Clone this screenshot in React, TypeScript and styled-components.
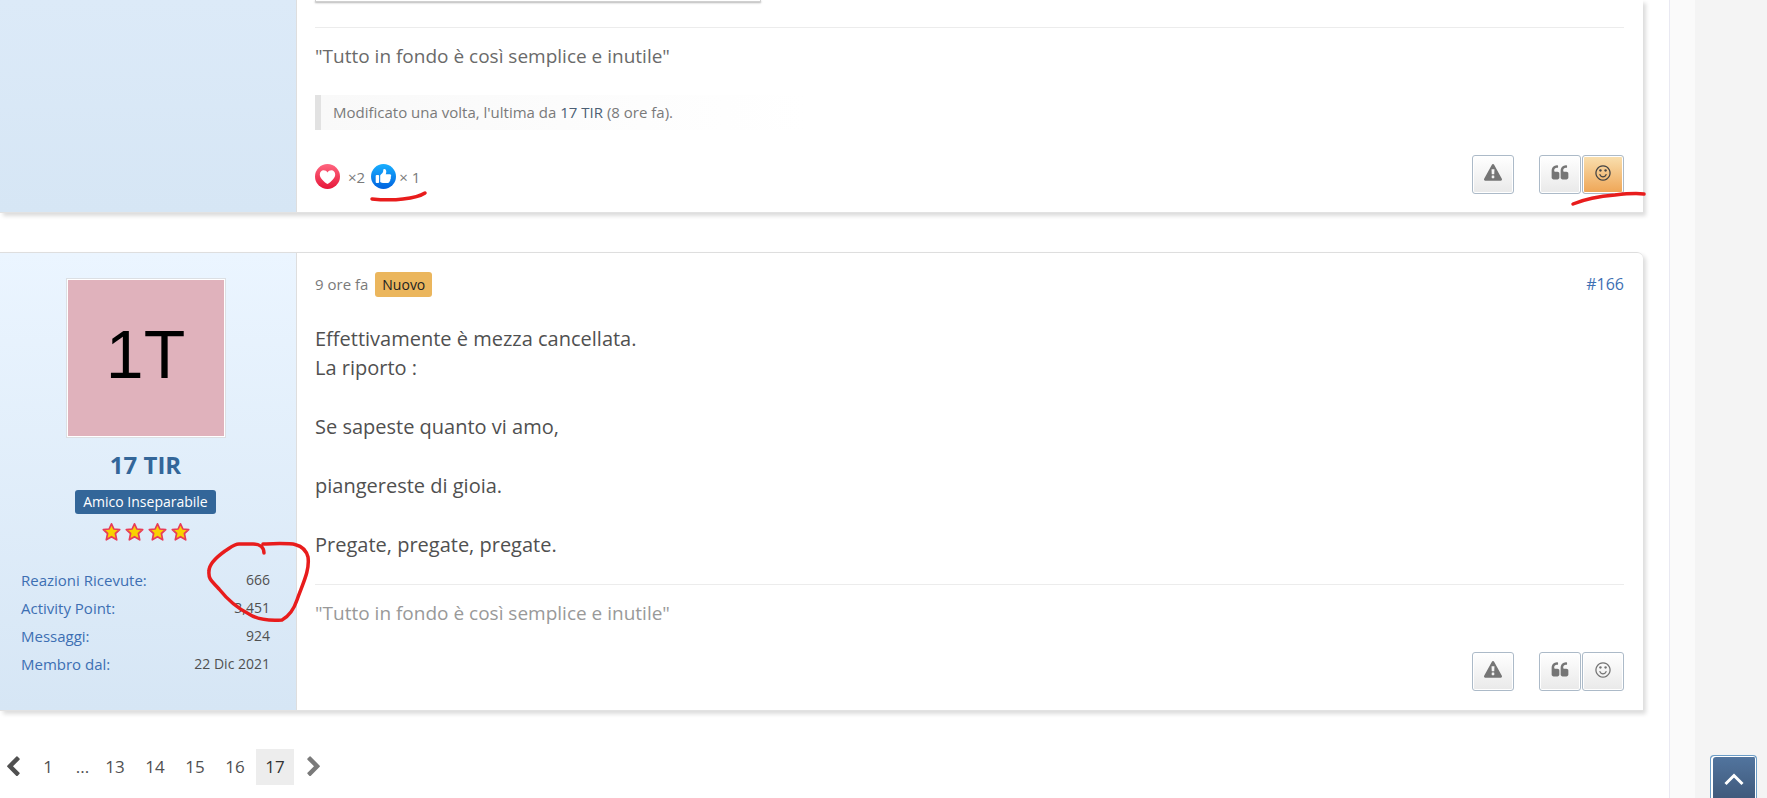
import React from 'react';
import styled, { createGlobalStyle, css } from 'styled-components';

const GlobalStyle = createGlobalStyle`
  *, *::before, *::after { box-sizing: border-box; }
  html { background: #f4f4f4; }
  body {
    margin: 0;
    color: #505050;
    font: 15px/24px "Open Sans", "Noto Sans", sans-serif;
  }
  a { color: inherit; text-decoration: none; }
  p, h3, dl, dd, ul { margin: 0; padding: 0; }
`;

const Page = styled.div`
  display: flex;
  min-height: 100vh;
  padding-right: 72px;
  overflow: hidden;
`;

const Main = styled.main`
  flex: 1;
  min-width: 0;
  padding-right: 26px;
  background: #fff;
  border-right: 1px solid #e9e9f2;
`;

const Strip = styled.div`
  flex: 0 0 25px;
  background: #fafafa;
`;

const Post = styled.article<{ $continued?: boolean }>`
  display: flex;
  margin-bottom: 38px;
  border-top: 1px solid #dedede;
  border-bottom: 1px solid #e2e2e2;
  border-radius: 0 6px 0 0;
  box-shadow: 3px 3px 4px rgba(0, 0, 0, 0.14);
  ${({ $continued }) =>
    $continued &&
    css`
      margin-bottom: 39px;
      border-top: 0;
      border-radius: 0;
    `}
`;

const Sidebar = styled.aside<{ $plain?: boolean }>`
  flex: 0 0 297px;
  display: flex;
  flex-direction: column;
  align-items: center;
  padding: 25px 26px 32px 21px;
  border-right: 1px solid #dedede;
  background: ${({ $plain }) =>
    $plain
      ? 'linear-gradient(#dceaf8, #d6e6f5)'
      : 'linear-gradient(#ebf5ff, #d6e6f5)'};
`;

const Body = styled.div<{ $top?: number }>`
  flex: 1;
  min-width: 0;
  display: flex;
  flex-direction: column;
  padding: ${({ $top = 0 }) => $top}px 19px 18px 18px;
`;

const Embed = styled.div`
  width: 446px;
  height: 2px;
  border: 1px solid #d0d0d0;
  border-top: 0;
  box-shadow: 0 1px 2px rgba(0, 0, 0, 0.3);
`;

const Signature = styled.div<{ $dim?: boolean }>`
  padding-top: 14px;
  border-top: 1px solid #ececec;
  color: ${({ $dim }) => ($dim ? '#999' : '#6a6a6a')};
  font-size: 19px;
  line-height: 29px;
`;

const EmbedGap = styled.div`
  height: 25px;
`;

const EditNote = styled.p`
  width: 490px;
  margin: 24px 0 25px;
  padding: 5px 12px;
  border-left: 6px solid #e2e2e2;
  background: linear-gradient(90deg, #f9f9f9, #fff);
  color: #7a7a7a;
  line-height: 25px;
  a { color: #4c5f75; }
`;

const Footer = styled.footer`
  display: flex;
  justify-content: space-between;
`;

const Reactions = styled.ul`
  display: flex;
  gap: 6px;
  padding-top: 9px;
  list-style: none;
`;

const Reaction = styled.li<{ $gap: number }>`
  position: relative;
  display: flex;
  align-items: center;
  gap: ${({ $gap }) => $gap}px;
  height: 25px;
  color: #7a7a7a;
  svg { display: block; }
`;

const Actions = styled.div`
  position: relative;
  display: flex;
  gap: 1px;
  margin-left: auto;
`;

const Action = styled.button<{ $active?: boolean; $apart?: boolean }>`
  display: flex;
  align-items: center;
  justify-content: center;
  width: 42px;
  height: 39px;
  margin-right: ${({ $apart }) => ($apart ? 24 : 0)}px;
  padding: 0 0 4px;
  border: 1px solid #acbac8;
  border-radius: 3px;
  box-shadow: inset 0 0 0 1px #fff;
  background: ${({ $active }) =>
    $active
      ? 'linear-gradient(#f9e0b0, #efa555)'
      : 'linear-gradient(#ffffff, #e9e9e9)'};
  color: ${({ $active }) => ($active ? '#444' : '#757575')};
  cursor: pointer;
`;

const Glyph = styled.svg`
  display: block;
  fill: currentColor;
`;

const Avatar = styled.a`
  display: flex;
  align-items: center;
  justify-content: center;
  width: 160px;
  height: 160px;
  padding-bottom: 8px;
  border: 1px solid #dcdfe3;
  box-shadow: inset 0 0 0 1px #fff;
  background: #e0b2bc;
  color: #000;
  font: 68px/80px "Liberation Sans", Arial, sans-serif;
`;

const UserName = styled.h3`
  margin-top: 11px;
  color: #336699;
  font-size: 24px;
  font-weight: 700;
  line-height: 32px;
`;

const Rank = styled.span`
  margin-top: 9px;
  padding: 0 8px;
  border-radius: 3px;
  background: #336699;
  color: #fff;
  font-size: 14px;
  line-height: 24px;
`;

const Stars = styled.div`
  display: flex;
  gap: 2px;
  margin-top: 8px;
`;

const Stats = styled.dl`
  position: relative;
  align-self: stretch;
  margin-top: 24px;
`;

const Stat = styled.div`
  display: flex;
  justify-content: space-between;
  line-height: 28px;
  dt { color: #3d6fb3; }
  dd { font-size: 14px; }
`;

const PostHeader = styled.header`
  display: flex;
  align-items: center;
  gap: 7px;
  line-height: 25px;
  color: #7a7a7a;
`;

const NewBadge = styled.span`
  padding: 0 7px;
  border-radius: 3px;
  background: #ebb65d;
  color: #222;
  font-size: 14px;
`;

const PostNumber = styled.a`
  margin-left: auto;
  color: #3d6fb3;
  font-size: 16px;
`;

const Message = styled.div`
  display: flex;
  flex-direction: column;
  gap: 30px;
  margin: 27px 0 25px;
  font-size: 20px;
  line-height: 29px;
  & + ${Signature} { margin-bottom: 24px; }
`;

const Pagination = styled.nav`
  display: flex;
  align-items: center;
  padding: 0 2px 12px;
  line-height: 36px;
`;

const PageLink = styled.a<{ $current?: boolean }>`
  min-width: 38px;
  margin-right: 2px;
  text-align: center;
  font-size: 17px;
  color: ${({ $current }) => ($current ? '#333' : '#505050')};
  background: ${({ $current }) => ($current ? '#ededed' : 'transparent')};
`;

const Dots = styled.span`
  width: 27px;
  text-align: center;
  font-size: 17px;
`;

const Chevron = styled.a<{ $next?: boolean }>`
  display: block;
  margin: ${({ $next }) => ($next ? '0 0 0 7px' : '0 5px 0 0')};
  color: ${({ $next }) => ($next ? '#7a7a7a' : '#505050')};
`;

const ToTop = styled.button`
  position: fixed;
  right: 10px;
  bottom: 0;
  display: flex;
  justify-content: center;
  width: 47px;
  height: 43px;
  padding: 17px 0 0;
  border: 1px solid #6b9cc6;
  border-bottom: 0;
  border-radius: 4px 4px 0 0;
  box-shadow: inset 2px 1px 0 #fff, inset -1px 0 0 #fff;
  background: linear-gradient(#52759f, #405a7c);
  cursor: pointer;
`;

const Pen = styled.svg<{ $left: number; $top: number }>`
  position: absolute;
  left: ${({ $left }) => $left}px;
  top: ${({ $top }) => $top}px;
  fill: none;
  stroke: #e81c1c;
  stroke-width: 3.5;
  stroke-linecap: round;
  stroke-linejoin: round;
  pointer-events: none;
`;

const WARNING =
  'M1024 1375v-190q0-14-9.5-23.5t-22.5-9.5h-192q-13 0-22.5 9.5t-9.5 23.5v190q0 14 9.5 23.5t22.5 9.5h192q13 0 22.5-9.5t9.5-23.5zm-2-374l18-459q0-12-10-19-13-11-24-11h-220q-11 0-24 11-10 7-10 21l17 457q0 10 10 16.5t24 6.5h185q14 0 23.5-6.5t10.5-16.5zm-14-934l768 1408q35 63-2 126-17 29-46.5 46t-63.5 17h-1536q-34 0-63.5-17t-46.5-46q-37-63-2-126l768-1408q17-31 47-49t65-18 65 18 47 49z';
const QUOTE =
  'M832 960v384q0 80-56 136t-136 56h-384q-80 0-136-56t-56-136v-704q0-104 40.5-198.5t109.5-163.5 163.5-109.5 198.5-40.5h64q26 0 45 19t19 45v128q0 26-19 45t-45 19h-64q-106 0-181 75t-75 181v32q0 40 28 68t68 28h224q80 0 136 56t56 136zm896 0v384q0 80-56 136t-136 56h-384q-80 0-136-56t-56-136v-704q0-104 40.5-198.5t109.5-163.5 163.5-109.5 198.5-40.5h64q26 0 45 19t19 45v128q0 26-19 45t-45 19h-64q-106 0-181 75t-75 181v32q0 40 28 68t68 28h224q80 0 136 56t56 136z';
const SMILE =
  'M1262 1075q-37 121-138 195t-228 74-228-74-138-195q-8-25 4-48.5t38-31.5q25-8 48.5 4t31.5 38q25 80 92.5 129.5t151.5 49.5 151.5-49.5 92.5-129.5q8-26 32-38t49-4 37 31.5 4 48.5zm-494-435q0 53-37.5 90.5t-90.5 37.5-90.5-37.5-37.5-90.5 37.5-90.5 90.5-37.5 90.5 37.5 37.5 90.5zm512 0q0 53-37.5 90.5t-90.5 37.5-90.5-37.5-37.5-90.5 37.5-90.5 90.5-37.5 90.5 37.5 37.5 90.5zm256 256q0-130-51-248.5t-136.5-204-204-136.5-248.5-51-248.5 51-204 136.5-136.5 204-51 248.5 51 248.5 136.5 204 204 136.5 248.5 51 248.5-51 204-136.5 136.5-204 51-248.5zm128 0q0 209-103 385.5t-279.5 279.5-385.5 103-385.5-103-279.5-279.5-103-385.5 103-385.5 279.5-279.5 385.5-103 385.5 103 279.5 279.5 103 385.5z';
const CHEVRON =
  'M1427 301l-531 531 531 531q19 19 19 45t-19 45l-166 166q-19 19-45 19t-45-19l-742-742q-19-19-19-45t19-45l742-742q19-19 45-19t45 19l166 166q19 19 19 45t-19 45z';

function Icon({ d, size = 18 }: { d: string; size?: number }) {
  return (
    <Glyph width={size} height={size} viewBox="0 0 1792 1792" aria-hidden="true">
      <path d={d} />
    </Glyph>
  );
}

function HeartBadge() {
  return (
    <svg width="25" height="25" viewBox="0 0 25 25" role="img" aria-label="Love">
      <defs>
        <linearGradient id="love" x1="0" y1="0" x2="0" y2="1">
          <stop offset="0" stopColor="#ff6680" />
          <stop offset="1" stopColor="#e61739" />
        </linearGradient>
      </defs>
      <circle cx="12.5" cy="12.5" r="12.5" fill="url(#love)" />
      <path
        d="M12.5 20C9 17.6 4.8 14.3 4.8 10.4C4.8 7.9 6.5 6.2 8.6 6.2C10.3 6.2 11.7 7 12.5 8.5C13.3 7 14.7 6.2 16.4 6.2C18.5 6.2 20.2 7.9 20.2 10.4C20.2 14.3 16 17.6 12.5 20Z"
        fill="#fff"
      />
    </svg>
  );
}

function LikeBadge() {
  return (
    <svg width="25" height="25" viewBox="0 0 25 25" role="img" aria-label="Like">
      <defs>
        <linearGradient id="like" x1="0" y1="0" x2="0" y2="1">
          <stop offset="0" stopColor="#18afff" />
          <stop offset="1" stopColor="#0062df" />
        </linearGradient>
      </defs>
      <circle cx="12.5" cy="12.5" r="12.5" fill="url(#like)" />
      <g fill="#fff">
        <rect x="4.7" y="11" width="3.4" height="8" rx="1" />
        <path d="M9.2 11.8C9.2 10.5 12.2 9.5 12.2 6.8C12.2 5.4 12.7 5 13.4 5C14.6 5 15.3 6.2 15.3 7.7C15.3 8.8 14.9 9.7 14.7 10.2H18.6C19.6 10.2 20.2 10.9 20.2 11.7C20.2 12.3 19.9 12.7 19.6 13C20.2 13.8 20 14.7 19.3 15.2C19.6 16 19.3 16.7 18.7 17.1C18.8 18.2 18 18.9 16.9 18.9H13.2C11.5 18.9 10.2 18.5 9.2 17.9Z" />
      </g>
    </svg>
  );
}

function Star() {
  return (
    <svg width="21" height="20" viewBox="0 0 20 20" aria-hidden="true">
      <path
        d="M10 1.8L12.4 7L18.2 7.6L13.9 11.5L15.2 17.8L10 14.7L4.8 17.8L6.1 11.5L1.8 7.6L7.6 7Z"
        fill="#f9d100"
        stroke="#e83c58"
        strokeWidth="1.7"
        strokeLinejoin="round"
      />
    </svg>
  );
}

function PostActions({ active, children }: { active?: boolean; children?: React.ReactNode }) {
  return (
    <Actions>
      <Action type="button" aria-label="Segnala" $apart>
        <Icon d={WARNING} />
      </Action>
      <Action type="button" aria-label="Cita">
        <Icon d={QUOTE} />
      </Action>
      <Action type="button" aria-label="Reagisci" $active={active}>
        <Icon d={SMILE} />
      </Action>
      {children}
    </Actions>
  );
}

const STATS = [
  ['Reazioni Ricevute:', '666'],
  ['Activity Point:', '3,451'],
  ['Messaggi:', '924'],
  ['Membro dal:', '22 Dic 2021'],
];

export default function App() {
  return (
    <>
      <GlobalStyle />
      <Page>
        <Main>
          <Post $continued>
            <Sidebar $plain />
            <Body>
              <Embed />
              <EmbedGap />
              <Signature>"Tutto in fondo è così semplice e inutile"</Signature>
              <EditNote>
                Modificato una volta, l'ultima da <a href="#user">17 TIR</a> (8 ore fa).
              </EditNote>
              <Footer>
                <Reactions>
                  <Reaction $gap={8}>
                    <HeartBadge />
                    <span>×2</span>
                  </Reaction>
                  <Reaction $gap={3}>
                    <LikeBadge />
                    <span>× 1</span>
                    <Pen $left={-3} $top={25} width="62" height="14">
                      <path d="M4 10C14 11 27 11 35 10C44 9 51 8 57 4" />
                    </Pen>
                  </Reaction>
                </Reactions>
                <PostActions active>
                  <Pen $left={98} $top={34} width="80" height="18">
                    <path d="M3 15C15 10 32 7 45 6C54 5 65 4 74 5" />
                  </Pen>
                </PostActions>
              </Footer>
            </Body>
          </Post>

          <Post>
            <Sidebar>
              <Avatar href="#user">1T</Avatar>
              <UserName>
                <a href="#user">17 TIR</a>
              </UserName>
              <Rank>Amico Inseparabile</Rank>
              <Stars role="img" aria-label="4 stelle">
                <Star />
                <Star />
                <Star />
                <Star />
              </Stars>
              <Stats>
                {STATS.map(([label, value]) => (
                  <Stat key={label}>
                    <dt>{label}</dt>
                    <dd>{value}</dd>
                  </Stat>
                ))}
                <Pen $left={183} $top={-26} width="110" height="88">
                  <path d="M60 13C60 7 55 4 49 4H35C30 4 26 8 21 11C14 16 5 23 5 31C4 40 9 42 15 49C23 59 33 68 45 74C54 80 64 81 78 80C87 75 91 66 93 60C98 45 106 31 104 17C100 2 88 3 59 4" />
                </Pen>
              </Stats>
            </Sidebar>
            <Body $top={19}>
              <PostHeader>
                <span>9 ore fa</span>
                <NewBadge>Nuovo</NewBadge>
                <PostNumber href="#post166">#166</PostNumber>
              </PostHeader>
              <Message>
                <p>
                  Effettivamente è mezza cancellata.
                  <br />
                  La riporto :
                </p>
                <p>Se sapeste quanto vi amo,</p>
                <p>piangereste di gioia.</p>
                <p>Pregate, pregate, pregate.</p>
              </Message>
              <Signature $dim>"Tutto in fondo è così semplice e inutile"</Signature>
              <Footer>
                <PostActions />
              </Footer>
            </Body>
          </Post>

          <Pagination aria-label="Pagine">
            <Chevron href="#prev" aria-label="Precedente">
              <Icon d={CHEVRON} size={22} />
            </Chevron>
            <PageLink href="#p1">1</PageLink>
            <Dots>...</Dots>
            <PageLink href="#p13">13</PageLink>
            <PageLink href="#p14">14</PageLink>
            <PageLink href="#p15">15</PageLink>
            <PageLink href="#p16">16</PageLink>
            <PageLink href="#p17" $current>
              17
            </PageLink>
            <Chevron href="#next" aria-label="Successiva" $next>
              <Glyph width="22" height="22" viewBox="0 0 1792 1792" aria-hidden="true">
                <path d={CHEVRON} transform="translate(1792 0) scale(-1 1)" />
              </Glyph>
            </Chevron>
          </Pagination>
        </Main>
        <Strip />
      </Page>
      <ToTop type="button" aria-label="Torna su">
        <svg width="20" height="13" viewBox="0 0 20 13" aria-hidden="true">
          <path d="M1.5 11L10 2.5L18.5 11" fill="none" stroke="#fff" strokeWidth="3" />
        </svg>
      </ToTop>
    </>
  );
}
